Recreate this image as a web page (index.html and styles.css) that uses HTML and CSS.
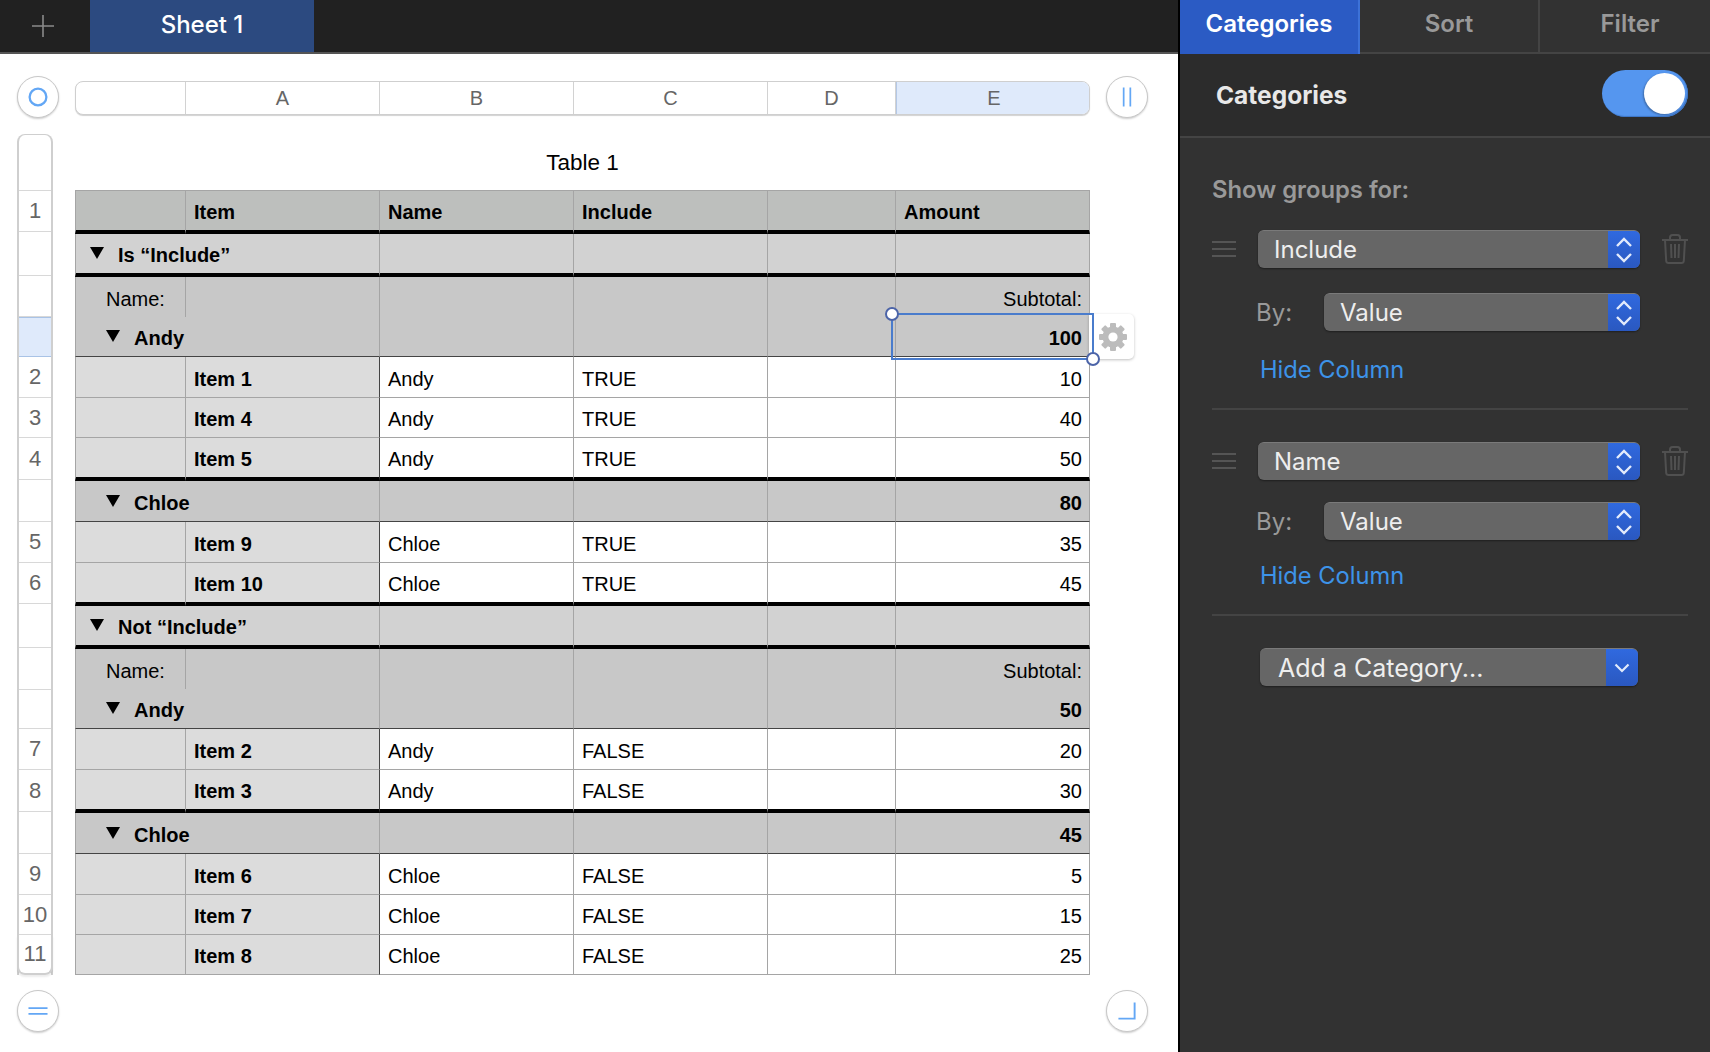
FILE: index.html
```html
<!DOCTYPE html>
<html>
	<head>
		<meta charset="utf-8" />
		<title>Table 1</title>
		<link rel="stylesheet" href="styles.css">
	</head>
	<body>
		<div id="left">
			<div id="topbar">
				<div class="add-sheet">
					<svg width="22" height="22" viewBox="0 0 22 22"><path d="M11 0V22M0 11H22" stroke="#8a8a8a" stroke-width="1.6" fill="none"/></svg>
				</div>
				<div class="sheet-tab">Sheet 1</div>
			</div>
			<div id="canvas">
				<div class="round-btn">
					<svg width="42" height="42" viewBox="0 0 42 42"><circle cx="21" cy="21" r="8.8" stroke="#63a7f5" stroke-width="2.4" fill="none"/></svg>
				</div>
				<div id="cols">
					<div class="col"></div>
					<div class="col">A</div>
					<div class="col">B</div>
					<div class="col">C</div>
					<div class="col">D</div>
					<div class="col on">E</div>
				</div>
				<div class="round-btn">
					<svg width="42" height="42" viewBox="0 0 42 42"><path d="M17.5 11V31M24.5 11V31" stroke="#63a7f5" stroke-width="1.8" fill="none"/></svg>
				</div>

				<div id="rows">
					<div class="rh rh-top"></div>
					<div class="rh h41">1</div>
					<div class="rh h44"></div>
					<div class="rh h41"></div>
					<div class="rh h40 on"></div>
					<div class="rh h41">2</div>
					<div class="rh h40">3</div>
					<div class="rh h42">4</div>
					<div class="rh h42"></div>
					<div class="rh h41">5</div>
					<div class="rh h41">6</div>
					<div class="rh h44"></div>
					<div class="rh h42"></div>
					<div class="rh h39"></div>
					<div class="rh h41">7</div>
					<div class="rh h42">8</div>
					<div class="rh h42"></div>
					<div class="rh h41">9</div>
					<div class="rh h40">10</div>
					<div class="rh h40 rh-end">11</div>
				</div>

				<div id="sheet">
					<div class="title">Table 1</div>
					<div id="tablewrap">
						<table>
							<colgroup>
								<col class="c1"><col class="c2"><col class="c2"><col class="c2"><col class="c4"><col class="c5">
							</colgroup>
							<tr class="head h44">
								<td></td><td>Item</td><td>Name</td><td>Include</td><td></td><td>Amount</td>
							</tr>
							<tr class="group h43 thick">
								<td colspan="2"><span class="tri"></span>Is “Include”</td><td></td><td></td><td></td><td></td>
							</tr>
							<tr class="sub h40 noline">
								<td class="lbl">Name:</td><td></td><td></td><td></td><td></td><td class="num normal">Subtotal:</td>
							</tr>
							<tr class="sub h40 dark">
								<td colspan="2"><span class="tri tri2"></span>Andy</td><td></td><td></td><td></td><td class="num">100</td>
							</tr>
							<tr class="item h41"><td></td><td>Item 1</td><td>Andy</td><td>TRUE</td><td></td><td class="num">10</td></tr>
							<tr class="item h40"><td></td><td>Item 4</td><td>Andy</td><td>TRUE</td><td></td><td class="num">40</td></tr>
							<tr class="item h43 thick"><td></td><td>Item 5</td><td>Andy</td><td>TRUE</td><td></td><td class="num">50</td></tr>
							<tr class="sub h41 dark">
								<td colspan="2"><span class="tri tri2"></span>Chloe</td><td></td><td></td><td></td><td class="num">80</td>
							</tr>
							<tr class="item h41"><td></td><td>Item 9</td><td>Chloe</td><td>TRUE</td><td></td><td class="num">35</td></tr>
							<tr class="item h43 thick"><td></td><td>Item 10</td><td>Chloe</td><td>TRUE</td><td></td><td class="num">45</td></tr>
							<tr class="group h43 thick">
								<td colspan="2"><span class="tri"></span>Not “Include”</td><td></td><td></td><td></td><td></td>
							</tr>
							<tr class="sub h40 noline">
								<td class="lbl">Name:</td><td></td><td></td><td></td><td></td><td class="num normal">Subtotal:</td>
							</tr>
							<tr class="sub h40 dark">
								<td colspan="2"><span class="tri tri2"></span>Andy</td><td></td><td></td><td></td><td class="num">50</td>
							</tr>
							<tr class="item h41"><td></td><td>Item 2</td><td>Andy</td><td>FALSE</td><td></td><td class="num">20</td></tr>
							<tr class="item h43 thick"><td></td><td>Item 3</td><td>Andy</td><td>FALSE</td><td></td><td class="num">30</td></tr>
							<tr class="sub h41 dark">
								<td colspan="2"><span class="tri tri2"></span>Chloe</td><td></td><td></td><td></td><td class="num">45</td>
							</tr>
							<tr class="item h41"><td></td><td>Item 6</td><td>Chloe</td><td>FALSE</td><td></td><td class="num">5</td></tr>
							<tr class="item h40"><td></td><td>Item 7</td><td>Chloe</td><td>FALSE</td><td></td><td class="num">15</td></tr>
							<tr class="item h40"><td></td><td>Item 8</td><td>Chloe</td><td>FALSE</td><td></td><td class="num">25</td></tr>
						</table>
						<div class="gearbox">
							<svg width="30" height="30" viewBox="0 0 30 30">
								<g fill="#bcbcbc">
									<rect x="12" y="1" width="6" height="28" rx="1"/>
									<rect x="12" y="1" width="6" height="28" rx="1" transform="rotate(45 15 15)"/>
									<rect x="12" y="1" width="6" height="28" rx="1" transform="rotate(90 15 15)"/>
									<rect x="12" y="1" width="6" height="28" rx="1" transform="rotate(135 15 15)"/>
									<circle cx="15" cy="15" r="10.5"/>
								</g>
								<circle cx="15" cy="15" r="4.6" fill="#fff"/>
							</svg>
						</div>
						<div class="selection">
							<span class="handle tl"></span>
							<span class="handle br"></span>
						</div>
					</div>
				</div>
				<div></div>

				<div class="round-btn">
					<svg width="42" height="42" viewBox="0 0 42 42"><path d="M11 18H31M11 24H31" stroke="#63a7f5" stroke-width="1.8" fill="none"/></svg>
				</div>
				<div></div>
				<div class="round-btn">
					<svg width="42" height="42" viewBox="0 0 42 42"><path d="M12 29H29V12" stroke="#63a7f5" stroke-width="2" fill="none"/></svg>
				</div>
			</div>
		</div>

		<div id="side">
			<div id="tabs">
				<div class="tab on">Categories</div>
				<div class="tab">Sort</div>
				<div class="tab">Filter</div>
			</div>
			<div class="cat-head">
				<div class="cat-title">Categories</div>
				<div class="toggle"><div class="knob"></div></div>
			</div>
			<div class="cat-body">
				<div class="show-for">Show groups for:</div>

				<div class="group">
					<div class="group-row">
						<div class="grip"><i></i><i></i><i></i></div>
						<div class="popup wide">
							<div class="popup-label">Include</div>
							<div class="popup-arrow">
								<svg width="18" height="28" viewBox="0 0 18 28"><path d="M2 10L9 3L16 10M2 18L9 25L16 18" stroke="#e3ebfb" stroke-width="2.400" fill="none"/></svg>
							</div>
						</div>
						<svg class="trash" width="26" height="30" viewBox="0 0 26 30"><path d="M0 6H26M8 6V3.500Q8 1 10.500 1H15.500Q18 1 18 3.500V6M3 6L4.200 27Q4.400 29 6.500 29H19.500Q21.600 29 21.800 27L23 6M9 10L9.500 24M13 10V24M17 10L16.500 24" stroke="#505050" stroke-width="2" fill="none"/></svg>
					</div>
					<div class="by-row">
						<div class="by">By:</div>
						<div class="popup narrow">
							<div class="popup-label">Value</div>
							<div class="popup-arrow">
								<svg width="18" height="28" viewBox="0 0 18 28"><path d="M2 10L9 3L16 10M2 18L9 25L16 18" stroke="#e3ebfb" stroke-width="2.400" fill="none"/></svg>
							</div>
						</div>
					</div>
					<div class="hide-col">Hide Column</div>
				</div>
				<div class="divider"></div>

				<div class="group group2">
					<div class="group-row">
						<div class="grip"><i></i><i></i><i></i></div>
						<div class="popup wide">
							<div class="popup-label">Name</div>
							<div class="popup-arrow">
								<svg width="18" height="28" viewBox="0 0 18 28"><path d="M2 10L9 3L16 10M2 18L9 25L16 18" stroke="#e3ebfb" stroke-width="2.400" fill="none"/></svg>
							</div>
						</div>
						<svg class="trash" width="26" height="30" viewBox="0 0 26 30"><path d="M0 6H26M8 6V3.500Q8 1 10.500 1H15.500Q18 1 18 3.500V6M3 6L4.200 27Q4.400 29 6.500 29H19.500Q21.600 29 21.800 27L23 6M9 10L9.500 24M13 10V24M17 10L16.500 24" stroke="#505050" stroke-width="2" fill="none"/></svg>
					</div>
					<div class="by-row">
						<div class="by">By:</div>
						<div class="popup narrow">
							<div class="popup-label">Value</div>
							<div class="popup-arrow">
								<svg width="18" height="28" viewBox="0 0 18 28"><path d="M2 10L9 3L16 10M2 18L9 25L16 18" stroke="#e3ebfb" stroke-width="2.400" fill="none"/></svg>
							</div>
						</div>
					</div>
					<div class="hide-col">Hide Column</div>
				</div>
				<div class="divider"></div>

				<div class="popup add">
					<div class="popup-label">Add a Category...</div>
					<div class="popup-arrow">
						<svg width="18" height="12" viewBox="0 0 18 12"><path d="M2.500 2.500L9 9L15.500 2.500" stroke="#e3ebfb" stroke-width="2.200" fill="none"/></svg>
					</div>
				</div>
			</div>
		</div>
	</body>
</html>
```

FILE: styles.css
```css
html,body{
	margin: 0;
	padding: 0;
}
body{
	display: flex;
	width: 1710px;
	height: 1052px;
	overflow: hidden;
	background: #fff;
	font-family: "Liberation Sans", Arial, sans-serif;
}
#left{
	width: 1178px;
	border-right: 2px solid #000;
}
#side{
	width: 530px;
	background: #323232;
	font-family: Inter, "Noto Sans", sans-serif;
}

/* top bar */
#topbar{
	display: flex;
	height: 52px;
	background: #212121;
	border-bottom: 2px solid #555;
}
.add-sheet{
	display: flex;
	align-items: center;
	justify-content: center;
	width: 90px;
	padding-right: 5px;
	box-sizing: border-box;
}
.sheet-tab{
	width: 224px;
	background: #2c4a80;
	color: #fff;
	font-family: Inter, sans-serif;
	font-size: 24px;
	font-weight: 500;
	line-height: 50px;
	text-align: center;
}

/* canvas */
#canvas{
	display: grid;
	grid-template-columns: 42px 1015px 42px;
	grid-template-rows: 58px 856px 42px;
	column-gap: 16px;
	padding: 22px 0 0 17px;
}
.round-btn{
	width: 42px;
	height: 42px;
	border: 1px solid #c8c8c8;
	border-radius: 50%;
	box-sizing: border-box;
	background: #fff;
	box-shadow: 0 1px 2px rgba(0,0,0,.2);
	display: flex;
	align-items: center;
	justify-content: center;
}
#cols{
	display: grid;
	grid-template-columns: 110px 194px 194px 194px 128px 195px;
	height: 34px;
	margin-top: 5px;
	border: 1px solid #cfcfcf;
	border-radius: 8px;
	box-sizing: border-box;
	box-shadow: 0 1px 1px rgba(0,0,0,.18);
	overflow: hidden;
	background: #fff;
}
.col{
	border-right: 1px solid #d2d2d2;
	color: #666;
	font-size: 20px;
	line-height: 33px;
	text-align: center;
}
.col:last-child{
	border-right: 0;
}
.col.on{
	background: #dfeafb;
	border-left: 1px solid #b4c8e6;
}

#rows{
	width: 36px;
	height: 841px;
	border: 1.5px solid #cfcfcf;
	border-width: 1px 2px 0 2px;
	border-radius: 8px 8px 0 0;
	box-sizing: border-box;
	display: flex;
	flex-direction: column;
}
.rh{
	box-sizing: border-box;
	border-bottom: 1px solid #d8d8d8;
	color: #666;
	font-size: 22px;
	font-weight: normal;
	text-align: center;
	display: flex;
	align-items: center;
	justify-content: center;
}
.rh-top{
	height: 56px;
	flex: none;
}
.rh.on{
	background: #dfeafb;
	border-top: 1px solid #a9c3e6;
	border-bottom: 1px solid #a9c3e6;
}
.rh-end{
	border-bottom: 2px solid #cfcfcf;
	border-radius: 0 0 8px 8px;
	box-shadow: 0 2px 2px rgba(0,0,0,.08);
	margin: 0 -2px;
	border-left: 2px solid #cfcfcf;
	border-right: 2px solid #cfcfcf;
}
.rh.h39{height: 39px; flex: none;}
.rh.h40{height: 40px; flex: none;}
.rh.h41{height: 41px; flex: none;}
.rh.h42{height: 42px; flex: none;}
.rh.h44{height: 44px; flex: none;}

/* table */
#sheet{
	width: 1015px;
}
.title{
	height: 56px;
	font-size: 22.500px;
	line-height: 58px;
	text-align: center;
	color: #000;
}
#tablewrap{
	position: relative;
}
table{
	table-layout: fixed;
	width: 1015px;
	border-collapse: separate;
	border-spacing: 0;
	font-size: 20px;
	color: #000;
}
.c1{width: 111px;}
.c2{width: 194px;}
.c4{width: 128px;}
.c5{width: 194px;}
td{
	box-sizing: border-box;
	padding: 4px 7px 0 8px;
	border-right: 1px solid #a5a5a5;
	border-bottom: 1px solid #a5a5a5;
	white-space: nowrap;
	vertical-align: middle;
}
td:first-child{
	border-left: 1px solid #a5a5a5;
}
tr.h40 td{height: 40px;}
tr.h41 td{height: 41px;}
tr.h43 td{height: 43px;}
tr.h44 td{height: 44px;}
.num{
	text-align: right;
	font-weight: bold;
}
.num.normal{
	font-weight: normal;
}
.item .num{
	font-weight: normal;
}
.head td{
	background: #bdbfbd;
	font-weight: bold;
	border-top: 1px solid #a5a5a5;
	border-bottom: 4px solid #000;
	padding-top: 3px;
}
.group td{
	background: #d2d2d2;
	font-weight: bold;
}
.group td:first-child{
	padding-left: 14px;
}
.sub td{
	background: #c8c8c8;
	font-weight: bold;
}
.sub td:first-child{
	padding-left: 30px;
}
.sub .lbl{
	font-weight: normal;
}
.noline td{
	border-bottom: 0;
}
.noline td:nth-child(2){
	font-weight: normal;
}
.dark td{
	border-bottom: 1px solid #444;
}
tr.thick td{
	border-bottom: 4px solid #000;
}
.item td{
	background: #fff;
}
.item td:nth-child(1),.item td:nth-child(2){
	background: #dcdcdc;
}
.item td:nth-child(2){
	font-weight: bold;
	border-right: 1px solid #444;
}
.tri{
	display: inline-block;
	width: 0;
	height: 0;
	border-left: 7px solid transparent;
	border-right: 7px solid transparent;
	border-top: 12px solid #000;
	margin-right: 14px;
	vertical-align: 3px;
}

/* selected cell */
.selection{
	position: absolute;
	left: 816px;
	top: 123px;
	width: 203px;
	height: 47px;
	border: 2px solid #4a7ccc;
	box-sizing: border-box;
}
.handle{
	position: absolute;
	width: 14px;
	height: 14px;
	border: 2px solid #4c64a8;
	border-radius: 50%;
	background: #fff;
	box-sizing: border-box;
}
.handle.tl{
	left: -8px;
	top: -8px;
}
.handle.br{
	right: -8px;
	bottom: -8px;
}
.gearbox{
	position: absolute;
	left: 1014px;
	top: 124px;
	width: 45px;
	height: 45px;
	padding-left: 9px;
	background: #fff;
	border-radius: 0 5px 5px 0;
	box-shadow: 0 1px 3px rgba(0,0,0,.25);
	box-sizing: border-box;
	display: flex;
	align-items: center;
}

/* side panel */
#tabs{
	display: flex;
	height: 54px;
	border-bottom: 2px solid #444;
	box-sizing: border-box;
}
.tab{
	width: 175px;
	border-right: 2px solid #444;
	color: #999;
	font-size: 24px;
	font-weight: 600;
	line-height: 47px;
	text-align: center;
}
.tab:nth-child(1){
	width: 180px;
	height: 54px;
	background: #2b5bc4;
	border-right: 2px solid #3d72d8;
	color: #fff;
	box-sizing: border-box;
}
.tab:nth-child(2){
	width: 180px;
	box-sizing: border-box;
}
.tab:last-child{
	flex: 1;
	border-right: 0;
	padding-left: 10px;
}
.cat-head{
	display: flex;
	align-items: center;
	justify-content: space-between;
	height: 84px;
	padding: 0 22px 1px 36px;
	background: #2c2c2c;
	border-bottom: 2px solid #444;
	box-sizing: border-box;
}
.cat-title{
	color: #e8e8e8;
	font-size: 24.500px;
	font-weight: 700;
}
.toggle{
	display: flex;
	align-items: center;
	justify-content: flex-end;
	width: 86px;
	height: 47px;
	margin-top: -2px;
	padding-right: 3px;
	border-radius: 24px;
	background: #5596ef;
	box-sizing: border-box;
	box-shadow: inset -1px -1px 1px #3c74c4;
}
.knob{
	width: 41px;
	height: 41px;
	border-radius: 50%;
	background: #fff;
	box-shadow: -1px 1px 2px rgba(0,0,0,.3);
}
.cat-body{
	padding: 37px 22px 0 32px;
}
.show-for{
	color: #999;
	font-size: 23.800px;
	font-weight: 600;
	line-height: 30px;
}
.group{
	margin-top: 25px;
}
.group-row{
	display: flex;
	align-items: center;
	gap: 22px;
}
.grip{
	width: 24px;
	flex: none;
}
.grip i{
	display: block;
	height: 2px;
	margin-top: 5px;
	background: #555;
}
.grip i:first-child{
	margin-top: 0;
}
.popup{
	display: flex;
	height: 38px;
	border-radius: 6px;
	overflow: hidden;
	background: #666;
	border-top: 1px solid #7a7a7a;
	box-sizing: border-box;
	box-shadow: 0 1px 2px rgba(0,0,0,.4);
	color: #eee;
	font-size: 24px;
}
.popup-label{
	flex: 1;
	padding-left: 16px;
	line-height: 38px;
}
.popup-arrow{
	display: flex;
	align-items: center;
	justify-content: center;
	width: 32px;
	background: linear-gradient(#3069df,#2a58c0);
}
.wide{
	width: 382px;
}
.narrow{
	width: 316px;
}
.trash{
	flex: none;
}
.by-row{
	display: flex;
	align-items: center;
	margin-top: 25px;
	padding-left: 44px;
}
.by{
	width: 68px;
	color: #999;
	font-size: 24px;
}
.hide-col{
	margin-top: 24px;
	padding-left: 48px;
	color: #3d93e8;
	font-size: 23.700px;
	line-height: 30px;
}
.divider{
	height: 2px;
	margin-top: 23px;
	background: #444;
}
.group2{
	margin-top: 32px;
}
.group2 .by-row{
	margin-top: 22px;
}
.group2 .hide-col{
	margin-top: 21px;
}
.add{
	width: 378px;
	margin: 32px 0 0 48px;
	font-size: 25px;
}
.add .popup-label{
	padding-left: 18px;
}
```
